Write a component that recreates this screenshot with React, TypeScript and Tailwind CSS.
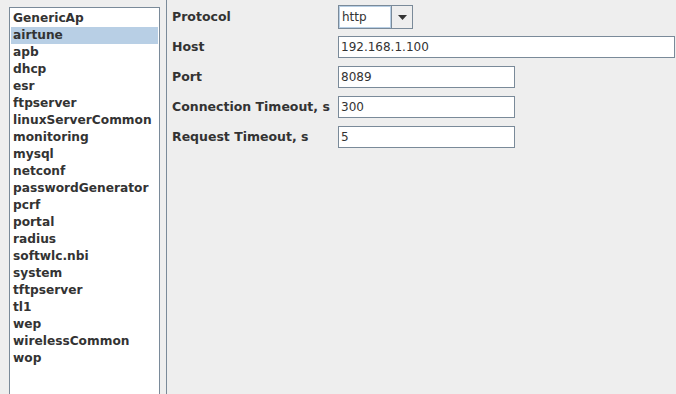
import React from "react"

const items = [
  "GenericAp",
  "airtune",
  "apb",
  "dhcp",
  "esr",
  "ftpserver",
  "linuxServerCommon",
  "monitoring",
  "mysql",
  "netconf",
  "passwordGenerator",
  "pcrf",
  "portal",
  "radius",
  "softwlc.nbi",
  "system",
  "tftpserver",
  "tl1",
  "wep",
  "wirelessCommon",
  "wop",
]

function Field({ value, wide }: { value: string; wide?: boolean }) {
  return (
    <div
      className={`h-[22px] border border-[#7a8a99] bg-white flex items-center pl-[2px] text-[12px] text-[#333333] ${
        wide ? "w-[337px]" : "w-[177px]"
      }`}
    >
      {value}
    </div>
  )
}

function Row({ label, children, top }: { label: string; children: React.ReactNode; top: string }) {
  return (
    <div className={`flex items-center ${top}`}>
      <div className="w-[166px] text-[12.5px] font-bold text-[#333333] whitespace-nowrap">{label}</div>
      {children}
    </div>
  )
}

export default function App() {
  return (
    <div
      className="w-[676px] h-[394px] bg-[#eeeeee] flex overflow-hidden"
      style={{ fontFamily: '"DejaVu Sans", sans-serif' }}
    >
      {/* list of modules */}
      <div className="w-[166px] pl-[9px] pr-[6px] pt-[7px] shrink-0">
        <div className="h-[400px] border border-[#7a8a99] bg-white pt-[2px] px-[1px]">
          {items.map((it) => (
            <div
              key={it}
              className={`h-[17px] leading-[17px] pl-[2px] text-[12.2px] font-bold text-[#333333] whitespace-nowrap ${
                it === "airtune" ? "bg-[#b8cfe5]" : ""
              }`}
            >
              {it}
            </div>
          ))}
        </div>
      </div>

      {/* split divider */}
      <div className="w-px bg-[#7a8a99] shrink-0" />

      {/* properties */}
      <div className="flex-1 pl-[5px] pt-[5px]">
        <Row label="Protocol" top="h-[24px]">
          <div className="flex h-[24px] w-[75px] border border-[#7a8a99] bg-white">
            <div className="w-[52px] border border-[#b8cfe5] flex items-center pl-[2px] text-[12px] text-[#333333]">
              http
            </div>
            <div className="flex-1 border-l border-[#7a8a99] bg-[#eeeeee] flex items-center justify-center">
              <svg width="9" height="5" viewBox="0 0 9 5">
                <path d="M0 0h9L4.5 5z" fill="#333333" />
              </svg>
            </div>
          </div>
        </Row>
        <Row label="Host" top="h-[22px] mt-[7px]">
          <Field value="192.168.1.100" wide />
        </Row>
        <Row label="Port" top="h-[22px] mt-[8px]">
          <Field value="8089" />
        </Row>
        <Row label="Connection Timeout, s" top="h-[22px] mt-[8px]">
          <Field value="300" />
        </Row>
        <Row label="Request Timeout, s" top="h-[22px] mt-[8px]">
          <Field value="5" />
        </Row>
      </div>
    </div>
  )
}
